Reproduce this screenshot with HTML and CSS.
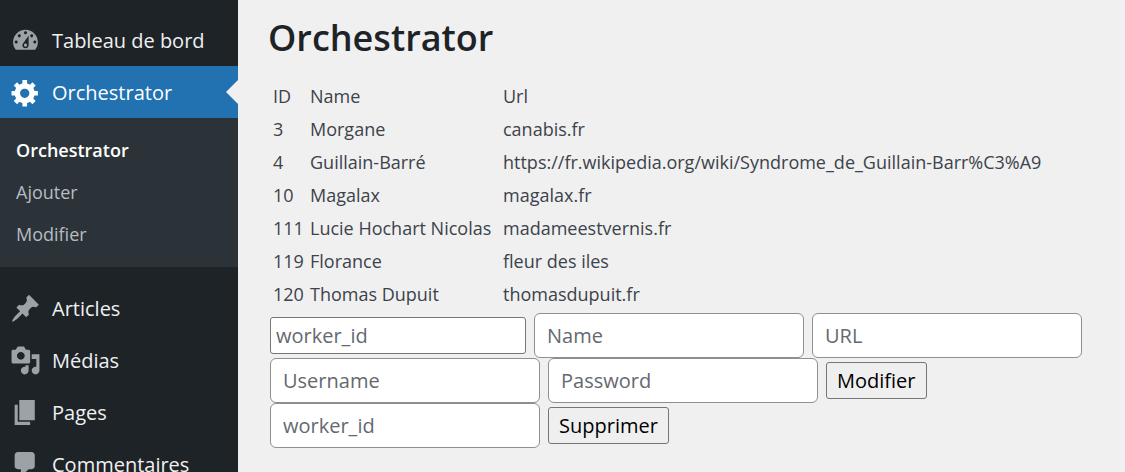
FILE: index.html
```html
<!DOCTYPE html>
<html lang="fr">
<head>
<meta charset="utf-8">
<meta name="viewport" content="width=device-width, initial-scale=1">
<title>Orchestrator</title>
<link rel="stylesheet" href="styles.css">
</head>
<body>
<div class="layout">
  <nav class="menu" aria-label="Menu principal">
    <ul class="menu-list">
      <li><a class="menu-item" href="#">
        <svg class="icon" viewBox="0 0 20 20" aria-hidden="true"><path d="M3.76 16h12.48c1.1-1.37 1.76-3.11 1.76-5 0-4.42-3.58-8-8-8s-8 3.58-8 8c0 1.89.66 3.63 1.76 5zM10 4c.55 0 1 .45 1 1s-.45 1-1 1-1-.45-1-1 .45-1 1-1zM6 6c.55 0 1 .45 1 1s-.45 1-1 1-1-.45-1-1 .45-1 1-1zm8 0c.55 0 1 .45 1 1s-.45 1-1 1-1-.45-1-1 .45-1 1-1zm-5.37 5.55L12 7v6c0 1.1-.9 2-2 2s-2-.9-2-2c0-.57.24-1.08.63-1.45zM4 10c.55 0 1 .45 1 1s-.45 1-1 1-1-.45-1-1 .45-1 1-1zm12 0c.55 0 1 .45 1 1s-.45 1-1 1-1-.45-1-1 .45-1 1-1zm-5 3c0-.55-.45-1-1-1s-1 .45-1 1 .45 1 1 1 1-.45 1-1z"/></svg>
        <span>Tableau de bord</span></a></li>
      <li><a class="menu-item current" href="#">
        <svg class="icon" viewBox="0 0 20 20" aria-hidden="true"><path d="M18 12h-2.18c-.17.7-.44 1.35-.81 1.93l1.54 1.54-2.1 2.1-1.54-1.54c-.58.36-1.23.63-1.91.79V19H8v-2.18c-.68-.16-1.33-.43-1.91-.79l-1.54 1.54-2.12-2.12 1.54-1.54c-.36-.58-.63-1.23-.79-1.91H1V9.03h2.17c.16-.7.44-1.35.8-1.94L2.43 5.55l2.1-2.1 1.54 1.54c.58-.37 1.24-.64 1.93-.81V2h3v2.18c.68.16 1.33.43 1.91.79l1.54-1.54 2.12 2.12-1.54 1.54c.36.59.64 1.24.8 1.94H18V12zm-8.5 1.5c1.66 0 3-1.34 3-3s-1.34-3-3-3-3 1.34-3 3 1.34 3 3 3z"/></svg>
        <span>Orchestrator</span></a>
        <ul class="submenu">
          <li><a class="submenu-item active" href="#">Orchestrator</a></li>
          <li><a class="submenu-item" href="#">Ajouter</a></li>
          <li><a class="submenu-item" href="#">Modifier</a></li>
        </ul></li>
      <li class="separator" role="separator"></li>
      <li><a class="menu-item" href="#">
        <svg class="icon" viewBox="0 0 20 20" aria-hidden="true"><path d="M10.44 3.02l1.82-1.82 6.36 6.35-1.83 1.82c-1.05-.68-2.48-.57-3.41.36l-.75.75c-.92.93-1.04 2.35-.35 3.41l-1.83 1.82-2.41-2.41-2.8 2.79c-.42.42-3.38 2.71-3.8 2.29s1.86-3.39 2.28-3.81l2.79-2.79L4.1 9.36l1.83-1.82c1.05.69 2.48.57 3.4-.36l.75-.75c.93-.92 1.05-2.35.36-3.41z"/></svg>
        <span>Articles</span></a></li>
      <li><a class="menu-item" href="#">
        <svg class="icon" viewBox="0 0 20 20" aria-hidden="true"><path d="M13 11V4c0-.55-.45-1-1-1h-1.67L9 1H5L3.67 3H2c-.55 0-1 .45-1 1v7c0 .55.45 1 1 1h10c.55 0 1-.45 1-1zM7 4.5c1.38 0 2.5 1.12 2.5 2.5S8.38 9.5 7 9.5 4.5 8.38 4.5 7 5.62 4.5 7 4.5zM14 6h5v10.5c0 1.38-1.12 2.5-2.5 2.5S14 17.88 14 16.5s1.12-2.5 2.5-2.5c.17 0 .34.02.5.05V9h-3V6zm-4 8.05V13h2v3.5c0 1.38-1.12 2.5-2.5 2.5S7 17.88 7 16.5 8.12 14 9.5 14c.17 0 .34.02.5.05z"/></svg>
        <span>Médias</span></a></li>
      <li><a class="menu-item" href="#">
        <svg class="icon" viewBox="0 0 20 20" aria-hidden="true"><path d="M6 15V2h10v13H6zm-1 1h8v2H3V5h2v11z"/></svg>
        <span>Pages</span></a></li>
      <li><a class="menu-item" href="#">
        <svg class="icon" viewBox="0 0 20 20" aria-hidden="true"><path d="M5 2h9c1.1 0 2 .9 2 2v7c0 1.1-.9 2-2 2h-2l-5 5v-5H5c-1.1 0-2-.9-2-2V4c0-1.1.9-2 2-2z"/></svg>
        <span>Commentaires</span></a></li>
    </ul>
  </nav>
  <main class="content">
    <h1 class="title">Orchestrator</h1>
    <table class="workers">
      <thead>
        <tr><th class="col-id" scope="col">ID</th><th class="col-name" scope="col">Name</th><th scope="col">Url</th></tr>
      </thead>
      <tbody>
        <tr><td>3</td><td>Morgane</td><td>canabis.fr</td></tr>
        <tr><td>4</td><td>Guillain-Barré</td><td>https://fr.wikipedia.org/wiki/Syndrome_de_Guillain-Barr%C3%A9</td></tr>
        <tr><td>10</td><td>Magalax</td><td>magalax.fr</td></tr>
        <tr><td>111</td><td>Lucie Hochart Nicolas</td><td>madameestvernis.fr</td></tr>
        <tr><td>119</td><td>Florance</td><td>fleur des iles</td></tr>
        <tr><td>120</td><td>Thomas Dupuit</td><td>thomasdupuit.fr</td></tr>
      </tbody>
    </table>
    <form class="form">
      <input class="field compact" type="number" placeholder="worker_id" aria-label="worker_id">
      <input class="field" type="text" placeholder="Name" aria-label="Name">
      <input class="field" type="text" placeholder="URL" aria-label="URL">
      <input class="field" type="text" placeholder="Username" aria-label="Username">
      <input class="field" type="text" placeholder="Password" aria-label="Password">
      <button class="button" type="button">Modifier</button>
    </form>
    <form class="form">
      <input class="field" type="text" placeholder="worker_id" aria-label="worker_id">
      <button class="button" type="button">Supprimer</button>
    </form>
  </main>
</div>
</body>
</html>
```
FILE: styles.css
```css
* {
  box-sizing: border-box;
}

body {
  margin: 0;
  background: #f0f0f1;
  color: #3c434a;
  font-family: "Open Sans", "Noto Sans", sans-serif;
  font-size: 18px;
}

.layout {
  display: flex;
  height: 100vh;
}

.menu {
  flex: 0 0 238px;
  padding-top: 14px;
  background: #1d2327;
  overflow: hidden;
}

.menu-list,
.submenu {
  margin: 0;
  padding: 0;
  list-style: none;
}

.menu-item {
  position: relative;
  display: flex;
  align-items: center;
  gap: 11px;
  height: 52px;
  padding-left: 10px;
  color: #f0f0f1;
  font-size: 20px;
  text-decoration: none;
}

.icon {
  width: 31px;
  height: 31px;
  fill: #9ca2a7;
}

.current {
  background: #2271b1;
  color: #fff;
}

.current .icon {
  fill: #fff;
}

.current::after {
  content: "";
  position: absolute;
  right: 0;
  top: 50%;
  margin-top: -12px;
  border: 12px solid transparent;
  border-left-width: 0;
  border-right-color: #f0f0f1;
}

.submenu {
  padding: 11px 0 12px;
  background: #2c3338;
}

.submenu-item {
  display: block;
  padding-left: 16px;
  color: #b5bcc2;
  line-height: 42px;
  text-decoration: none;
}

.active {
  color: #fff;
  font-weight: 600;
}

.separator {
  height: 15px;
}

.content {
  flex: 1;
  min-width: 0;
  padding: 13px 30px 0;
}

.title {
  margin: 0 0 17px;
  color: #1d2327;
  font-size: 36px;
  font-weight: 600;
  line-height: 50px;
}

.workers {
  margin: 0 0 2px 5px;
  border-collapse: collapse;
  line-height: 33px;
}

.workers th,
.workers td {
  padding: 0;
  font-weight: 400;
  text-align: left;
  white-space: nowrap;
}

.workers .col-id {
  min-width: 37px;
}

.workers .col-name {
  min-width: 193px;
}

.form {
  display: flex;
  flex-wrap: wrap;
  align-items: center;
  column-gap: 8px;
  margin: 0 0 0 2px;
}

.field {
  width: 270px;
  height: 45px;
  padding: 0 12px;
  border: 1px solid #8c8f94;
  border-radius: 6px;
  background: #fff;
  color: #2c3338;
  font-family: inherit;
  font-size: 20px;
}

.field::placeholder {
  color: #646970;
}

.compact {
  width: 256px;
  height: 37px;
  padding: 0 5px;
  border-color: #767676;
  border-radius: 3px;
}

.button {
  height: 37px;
  padding: 0 10px;
  border: 1px solid #767676;
  border-radius: 3px;
  background: #efefef;
  color: #000;
  font-family: inherit;
  font-size: 20px;
}
```
